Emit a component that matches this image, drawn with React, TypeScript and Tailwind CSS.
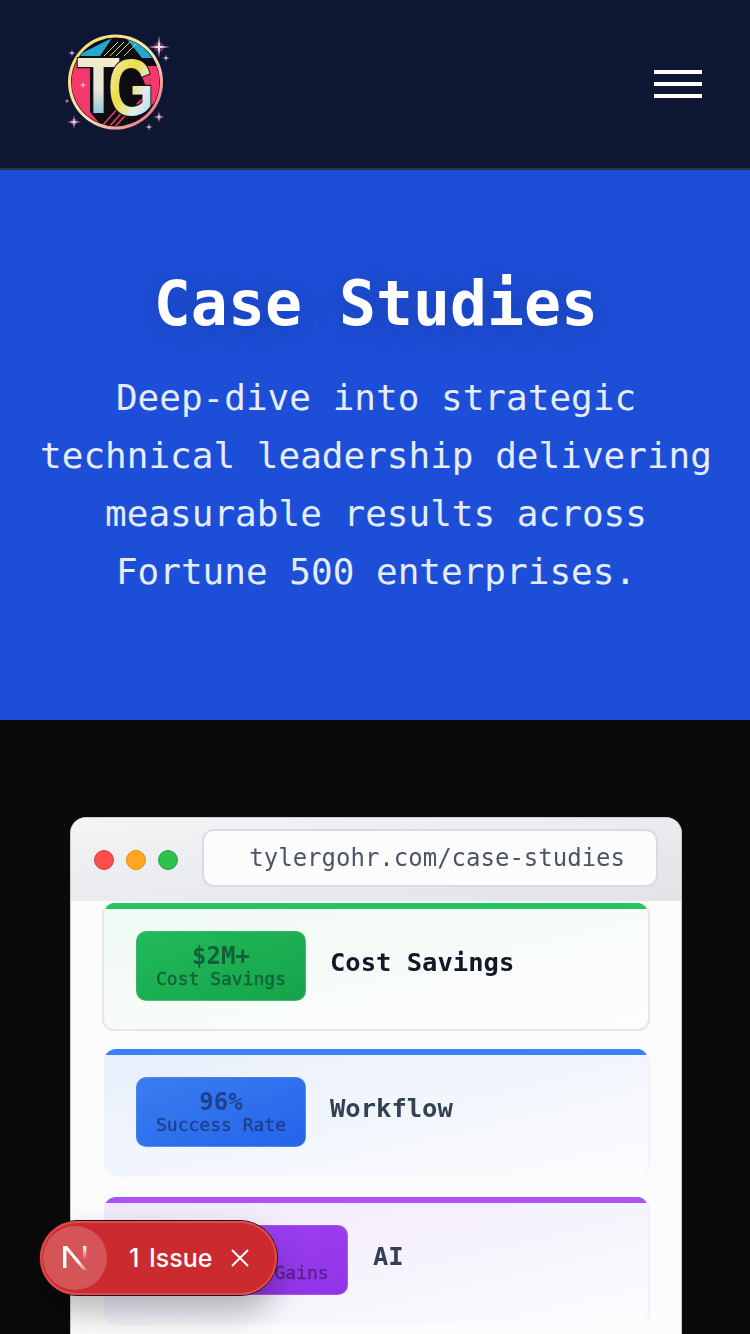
const mono = "font-['DejaVu_Sans_Mono','Liberation_Mono',monospace]";

function Sparkle({ x, y, r }: { x: number; y: number; r: number }) {
  const k = r * 0.1;
  return (
    <g>
      <circle cx={x} cy={y} r={r * 0.45} fill="#f472a8" opacity={0.4} />
      <polygon
        fill="#ffe6ef"
        points={`${x},${y - r} ${x + k},${y - k} ${x + r},${y} ${x + k},${y + k} ${x},${y + r} ${x - k},${y + k} ${x - r},${y} ${x - k},${y - k}`}
      />
    </g>
  );
}

function Logo() {
  return (
    <svg width="112" height="112" viewBox="60 28 112 112" className="ml-3 shrink-0">
      <defs>
        <linearGradient id="ring" x1="0" y1="0" x2="1" y2="1">
          <stop offset="0" stopColor="#f5dc5a" />
          <stop offset="0.55" stopColor="#f6e7b8" />
          <stop offset="1" stopColor="#ee4f7c" />
        </linearGradient>
        <linearGradient id="letterT" x1="0" y1="0" x2="0" y2="1">
          <stop offset="0" stopColor="#f4edc4" />
          <stop offset="0.55" stopColor="#e9e7da" />
          <stop offset="1" stopColor="#58b2da" />
        </linearGradient>
        <linearGradient id="letterG" x1="0" y1="0" x2="1" y2="1">
          <stop offset="0" stopColor="#f2eedd" />
          <stop offset="0.42" stopColor="#ecdc45" />
          <stop offset="0.68" stopColor="#dfeef0" />
          <stop offset="1" stopColor="#8fc6df" />
        </linearGradient>
        <clipPath id="disc">
          <circle cx="115.5" cy="82" r="44" />
        </clipPath>
      </defs>
      <circle cx="115.5" cy="82" r="47.5" fill="url(#ring)" />
      <circle cx="115.5" cy="82" r="44.5" fill="#0d0c12" />
      <g clipPath="url(#disc)">
        <polygon points="76,56 112,38 100,56" fill="#22a7cf" />
        <polygon points="126,38 160,38 160,58 142,58" fill="#22a7cf" />
        <path d="M118 42L104 56M124 42L110 56M130 42L116 56M136 44L124 56" stroke="#c8d36a" strokeWidth="1" />
        <polygon points="68,58 90,58 90,112 100,124 68,124" fill="#f2386c" />
        <polygon points="138,66 162,66 162,96 144,112 136,104 148,92" fill="#f2386c" />
        <path d="M102 126L120 106M108 128L126 108M114 128L130 110" stroke="#e83a6c" strokeWidth="1.6" />
      </g>
      <g transform="translate(77 113) scale(0.88 1)">
        <text
          fontFamily="'Liberation Sans', sans-serif"
          fontWeight="700"
          fontSize="80"
          fill="url(#letterT)"
          stroke="#15131a"
          strokeWidth="2.4"
          paintOrder="stroke"
        >
          T
        </text>
      </g>
      <g transform="translate(108 115) scale(0.74 1)">
        <text
          fontFamily="'Liberation Sans', sans-serif"
          fontWeight="700"
          fontSize="80"
          fill="url(#letterG)"
          stroke="#15131a"
          strokeWidth="2.4"
          paintOrder="stroke"
        >
          G
        </text>
      </g>
      <Sparkle x={159} y={47} r={11} />
      <Sparkle x={72} y={53} r={4} />
      <Sparkle x={166} y={58} r={4} />
      <Sparkle x={83} y={85} r={4} />
      <Sparkle x={67} y={101} r={3} />
      <Sparkle x={74} y={122} r={7} />
      <Sparkle x={159} y={117} r={6} />
      <Sparkle x={149} y={127} r={4} />
    </svg>
  );
}

type CardInfo = {
  value: string;
  label: string;
  title: string;
  shell: string;
  bar: string;
  badge: string;
  text: string;
  heading: string;
};

const cards: CardInfo[] = [
  {
    value: "$2M+",
    label: "Cost Savings",
    title: "Cost Savings",
    shell: "border-x-2 border-b-2 border-[#e5e7eb] bg-gradient-to-br from-[#f0f9f3] to-[#fdfdfe] pl-[32px]",
    bar: "bg-[#22c55e] inset-x-0",
    badge: "w-[170px] bg-gradient-to-br from-[#20bb5a] to-[#16a34a]",
    text: "text-[#12603a]",
    heading: "ml-[24px] text-[#111827]",
  },
  {
    value: "96%",
    label: "Success Rate",
    title: "Workflow",
    shell: "mt-[18px] ml-[2px] border-r-2 border-[#eef3fe] bg-gradient-to-br from-[#e8effb] to-[#fcfcfe] pl-[32px]",
    bar: "bg-[#3b82f6] inset-x-0",
    badge: "w-[170px] bg-gradient-to-br from-[#3b7df0] to-[#2563eb]",
    text: "text-[#1e408f]",
    heading: "ml-[24px] text-[#334155]",
  },
  {
    value: "50%",
    label: "Efficiency Gains",
    title: "AI",
    shell: "mt-[20px] ml-[2px] border-r-2 border-[#f5edfe] bg-gradient-to-br from-[#f1e9fb] to-[#fcfcfe] pl-[32px]",
    bar: "bg-[#a855f7] inset-x-0",
    badge: "w-[212px] bg-gradient-to-br from-[#9c44ee] to-[#9333ea]",
    text: "text-[#5b2192]",
    heading: "ml-[25px] text-[#334155]",
  },
];

function ResultCard({ card }: { card: CardInfo }) {
  return (
    <div className={`relative flex h-[128px] items-start overflow-hidden rounded-[12px] pt-[28px] ${card.shell}`}>
      <div className={`absolute top-0 h-[6px] ${card.bar}`} />
      <div
        className={`flex h-[70px] shrink-0 flex-col items-center justify-center rounded-[10px] border border-white/15 font-bold ${card.badge} ${card.text}`}
      >
        <span className="text-[24px] leading-[25px]">{card.value}</span>
        <span className="text-[18px] font-normal leading-[19px] [-webkit-text-stroke:0.4px_currentColor]">{card.label}</span>
      </div>
      <span className={`mt-[13px] text-[25.5px] font-bold leading-[36px] ${card.heading}`}>{card.title}</span>
    </div>
  );
}

function BrowserWindow() {
  return (
    <div className={`ml-[70px] w-[612px] overflow-hidden rounded-t-[16px] border-x border-t border-[#c9ccd2] bg-[#fcfcfd] blur-[0.35px] ${mono}`}>
      <div className="flex h-[83px] items-center bg-gradient-to-br from-[#f3f4f6] to-[#e1e3e7] pl-[23px] pr-[23px]">
        <div className="flex gap-[12px]">
          <span className="size-[20px] rounded-full border border-[#e23b3b] bg-[#ff4d4d]" />
          <span className="size-[20px] rounded-full border border-[#e8890f] bg-[#ffa51f]" />
          <span className="size-[20px] rounded-full border border-[#27a844] bg-[#2fc04c]" />
        </div>
        <div className="mb-[3px] ml-[24px] flex h-[58px] flex-1 items-center justify-end rounded-[12px] border-2 border-[#d9dbe2] bg-[#fcfcfd] pr-[31px] text-[24px] text-[#4b5563]">
          tylergohr.com/case-studies
        </div>
      </div>
      <div className="h-[460px] pl-[31px] pr-[31px] pt-[2px]">
        {cards.map((card) => (
          <ResultCard key={card.title} card={card} />
        ))}
      </div>
    </div>
  );
}

function IssuePill() {
  return (
    <div className="absolute left-[39px] top-[1220px] flex h-[76px] w-[239px] items-center rounded-full border-[1.5px] border-[#171717] bg-[#cb2a2f] font-['Inter',sans-serif] shadow-[0_16px_32px_rgba(0,0,0,0.28)]">
      <div className="absolute inset-0 rounded-full border-2 border-[#e5484d]" />
      <div className="relative ml-[3px] flex size-[64px] items-center justify-center rounded-full bg-white/20">
        <svg width="26" height="26" viewBox="0 0 26 26" fill="none">
          <defs>
            <linearGradient id="nDiag" x1="0" y1="0" x2="1" y2="1">
              <stop offset="0.6" stopColor="#fff" />
              <stop offset="1" stopColor="#fff" stopOpacity="0.2" />
            </linearGradient>
            <linearGradient id="nRight" x1="0" y1="0" x2="0" y2="1">
              <stop offset="0" stopColor="#fff" />
              <stop offset="0.75" stopColor="#fff" stopOpacity="0" />
            </linearGradient>
          </defs>
          <rect x="1" y="1" width="3.4" height="22" fill="#fff" />
          <polygon points="1,1 5,1 25,25 21,25" fill="url(#nDiag)" />
          <rect x="21" y="1" width="3.4" height="18" fill="url(#nRight)" />
        </svg>
      </div>
      <span className="relative ml-[22px] text-[25px] font-medium leading-none text-white [word-spacing:3px]">1 Issue</span>
      <svg className="relative ml-[18px]" width="18" height="18" viewBox="0 0 18 18" stroke="#fff" strokeWidth="2" fill="none">
        <path d="M1 1L17 17M17 1L1 17" />
      </svg>
    </div>
  );
}

export default function App() {
  return (
    <div className={`relative h-[1334px] w-[750px] overflow-hidden bg-[#0a0a0a] ${mono}`}>
      <header className="flex h-[170px] items-center justify-between border-b-2 border-[#2a3347] bg-[#0d1633] pl-[48px] pr-[48px]">
        <Logo />
        <button className="flex w-[48px] flex-col gap-[8px]">
          <span className="h-[4px] bg-white" />
          <span className="h-[4px] bg-white" />
          <span className="h-[4px] bg-white" />
        </button>
      </header>
      <section className="h-[550px] bg-[#1d4ed8] pl-[34px] pr-[32px] pt-[98px] text-center text-white">
        <h1 className="text-[61.5px] font-bold leading-[72px] [text-shadow:0_4px_32px_rgba(0,0,0,0.22)]">Case Studies</h1>
        <p className="mt-[29px] text-[36px] leading-[58px] text-[#e4ecfd]">
          Deep-dive into strategic technical leadership delivering measurable results across Fortune 500 enterprises.
        </p>
      </section>
      <section className="pt-[97px]">
        <BrowserWindow />
      </section>
      <IssuePill />
    </div>
  );
}
